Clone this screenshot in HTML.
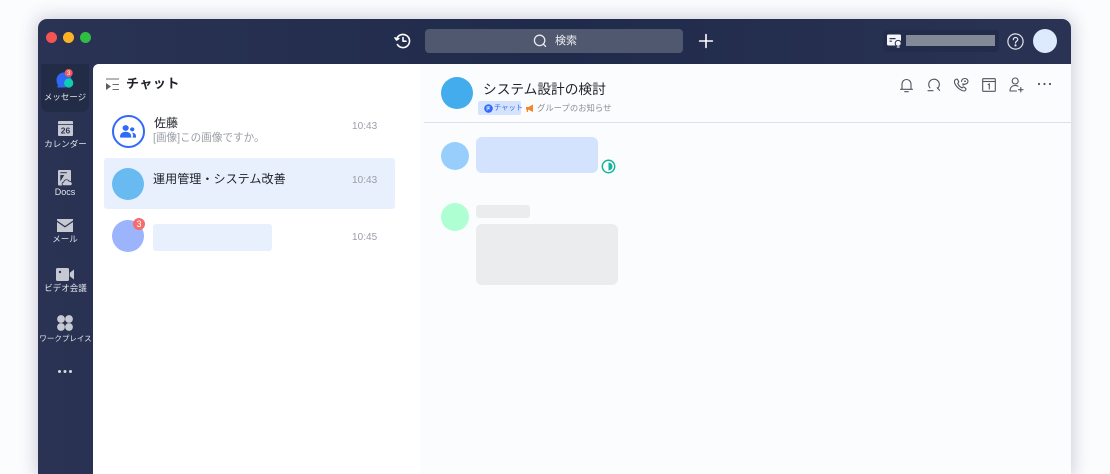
<!DOCTYPE html>
<html lang="ja">
<head>
<meta charset="utf-8">
<style>
*{box-sizing:border-box;margin:0;padding:0}
html,body{width:1110px;height:474px;overflow:hidden;background:#fbfcfe;font-family:"Liberation Sans","Noto Sans CJK JP",sans-serif}
.a{position:absolute}
.win{position:absolute;left:38px;top:19px;width:1033px;height:455px;border-radius:9px 9px 0 0;background:linear-gradient(90deg,#2a3353,#202a4b 50%,#2a3353);box-shadow:0 0 16px 3px rgba(60,70,100,.22)}
.clip{position:absolute;left:0;top:0;width:1110px;height:474px;overflow:hidden}
.dot{position:absolute;width:11px;height:11px;border-radius:50%;top:32px}
.nav{position:absolute;color:#e4e6ec;font-size:8.5px;line-height:12px;text-align:center;white-space:nowrap}
.t{position:absolute;white-space:nowrap}
.time{position:absolute;left:352px;font-size:10px;color:#9a9ea6;line-height:14px;letter-spacing:.05px}
</style>
</head>
<body>
<div class="clip">
<div class="win"></div>
<div class="dot" style="left:46px;background:#f45452"></div>
<div class="dot" style="left:63px;background:#fbb325"></div>
<div class="dot" style="left:80px;background:#31bd44"></div>

<!-- top bar -->
<svg class="a" style="left:393px;top:31px" width="20" height="20" viewBox="0 0 20 20" fill="none" stroke="#fff" stroke-width="1.600" stroke-linecap="round" stroke-linejoin="round"><path d="M3.600 8.200A6.600 6.600 0 1 1 4.400 13.600"/><path d="M2 6.800 3.600 9l2.200-1.400"/><path d="M10 6.600v3.600h3"/></svg>
<div class="a" style="left:425px;top:29px;width:258px;height:24px;border-radius:4px;background:#50586f"></div>
<svg class="a" style="left:532px;top:33px" width="16" height="16" viewBox="0 0 16 16" fill="none" stroke="#e9ebf0" stroke-width="1.300" stroke-linecap="round"><circle cx="7.600" cy="7.400" r="5.200"/><path d="M11.400 11.200 13.600 13.400"/></svg>
<div class="t" style="left:555px;top:33px;font-size:11px;line-height:16px;color:#eceef2">検索</div>
<svg class="a" style="left:698px;top:33px" width="16" height="16" viewBox="0 0 16 16" stroke="#fff" stroke-width="1.600" stroke-linecap="round"><path d="M8 1.600v12.800M1.600 8h12.800"/></svg>
<div class="a" style="left:883px;top:30px;width:116px;height:22px;border-radius:4px;background:#232c4b"></div>
<svg class="a" style="left:887px;top:34px" width="15" height="14" viewBox="0 0 15 14"><rect x="0" y=".5" width="14" height="11" rx="1.200" fill="#f4f5f8"/><path d="M2.500 4h6v1.200h-6zM2.500 6.600h2.400v1.200H2.500z" fill="#2b3453"/><circle cx="11.200" cy="9.400" r="3" fill="#f4f5f8" stroke="#232c4b"/><path d="M9.800 12.400h2.800v1.200H9.800z" fill="#f4f5f8"/></svg>
<div class="a" style="left:906px;top:35px;width:89px;height:11px;background:#848998"></div>
<svg class="a" style="left:1007px;top:33px" width="17" height="17" viewBox="0 0 17 17" fill="none" stroke="#e4e6ec" stroke-width="1.200" stroke-linecap="round"><circle cx="8.500" cy="8.500" r="7.600"/><path d="M6.300 6.700C6.300 5.300 7.300 4.500 8.500 4.500 9.800 4.500 10.800 5.300 10.800 6.500 10.800 8 8.500 8.300 8.500 10"/><circle cx="8.500" cy="12.400" r=".5" fill="#e4e6ec"/></svg>
<div class="a" style="left:1033px;top:29px;width:24px;height:24px;border-radius:50%;background:#dde9fd"></div>

<!-- sidebar -->
<div class="a" style="left:41px;top:64px;width:48px;height:48px;border-radius:0 0 7px 7px;background:#232c46"></div>
<svg class="a" style="left:54px;top:68px" width="24" height="24" viewBox="0 0 24 24"><path d="M10 4.500C14 4.500 17.500 7.500 17.500 12S14 19.500 10 19.500H3.200L3.900 17C3 15.800 2.500 14 2.500 12 2.500 7.500 6 4.500 10 4.500Z" fill="#2f68f4"/><circle cx="14.700" cy="15" r="4.600" fill="#0fcdb3"/><circle cx="14.700" cy="5" r="4" fill="#ee5b5e"/><text x="14.700" y="7.200" font-size="6" fill="#fff" text-anchor="middle" font-family="Liberation Sans">3</text></svg>
<div class="nav" style="left:41px;width:48px;top:91px">メッセージ</div>

<svg class="a" style="left:58px;top:121px" width="15" height="15" viewBox="0 0 15 15"><rect width="15" height="15" rx="1" fill="#c6c9d2"/><rect x="0" y="3" width="15" height=".8" fill="#2a3353"/><text x="7.500" y="12.500" font-size="8.500" font-weight="700" fill="#2a3353" text-anchor="middle" font-family="Liberation Sans">26</text></svg>
<div class="nav" style="left:38px;width:55px;top:138px">カレンダー</div>

<svg class="a" style="left:58px;top:170px" width="16" height="16" viewBox="0 0 16 16"><rect x="0" y="0" width="13" height="15.500" rx="1" fill="#c6c9d2"/><path d="M2.300 2.200h6.500v1H2.300z" fill="#2a3353"/><path d="M2.300 5h4L2.300 11.500z" fill="#2a3353"/><path d="M6 15.700c-2.200 0-2.700-3.200-.3-3.600.4-2.700 4.300-3.200 5.300-.9 3-.3 4.600 3.700 1.500 4.500z" fill="#c6c9d2" stroke="#2a3353" stroke-width=".8"/></svg>
<div class="nav" style="left:41px;width:48px;top:186px;font-size:9px">Docs</div>

<svg class="a" style="left:57px;top:219px" width="16" height="13" viewBox="0 0 16 13"><path d="M0 0h16v1.500L8 7 0 1.500z" fill="#c6c9d2"/><path d="M0 3 8 8.500 16 3v10H0z" fill="#c6c9d2"/></svg>
<div class="nav" style="left:41px;width:48px;top:233px">メール</div>

<svg class="a" style="left:56px;top:268px" width="18" height="13" viewBox="0 0 18 13"><rect width="13" height="13" rx="1.500" fill="#c6c9d2"/><path d="M13.800 4.800 18 1.500v10l-4.200-3.200z" fill="#c6c9d2"/><circle cx="4" cy="4" r="1.200" fill="#2a3353"/></svg>
<div class="nav" style="left:38px;width:55px;top:282px">ビデオ会議</div>

<svg class="a" style="left:57px;top:315px" width="16" height="16" viewBox="0 0 16 16" fill="#c6c9d2"><circle cx="4" cy="4" r="3.900"/><circle cx="12" cy="4" r="3.900"/><circle cx="4" cy="12" r="3.900"/><circle cx="12" cy="12" r="3.900"/></svg>
<div class="nav" style="left:38px;width:55px;top:333px;font-size:7.500px">ワークプレイス</div>

<svg class="a" style="left:57px;top:369px" width="16" height="5" viewBox="0 0 16 5" fill="#d8dae1"><circle cx="2.500" cy="2.500" r="1.500"/><circle cx="8" cy="2.500" r="1.500"/><circle cx="13.500" cy="2.500" r="1.500"/></svg>

<!-- panels -->
<div class="a" style="left:93px;top:64px;width:978px;height:410px;background:#fbfcfe;border-radius:6px 0 0 0;overflow:hidden">
  <div class="a" style="left:0;top:0;width:327px;height:410px;background:#fff"></div>
</div>

<!-- list header -->
<svg class="a" style="left:105px;top:77px" width="15" height="15" viewBox="0 0 15 15" fill="none" stroke="#6a6e77" stroke-width="1.100"><path d="M1 2h13M7.500 7.500H14M7.500 12.500H14"/><path d="M1 6l5 3.500L1 13z" fill="#5b5f68" stroke="none"/></svg>
<div class="t" style="left:126px;top:75px;font-size:13px;line-height:18px;font-weight:700;color:#1f2329;letter-spacing:.5px">チャット</div>

<!-- row 1 -->
<div class="a" style="left:112px;top:115px;width:33px;height:33px;border-radius:50%;border:2px solid #2f6bf6;background:#fff"></div>
<svg class="a" style="left:120px;top:125px" width="16" height="13" viewBox="0 0 17 15" preserveAspectRatio="none" fill="#2f6bf6"><circle cx="6" cy="3.500" r="3.300"/><circle cx="13" cy="5" r="2.300"/><path d="M0 13.500C0 10 2.500 7.800 6 7.800S12 10 12 13.500c0 .6-.4 1-1 1H1c-.6 0-1-.4-1-1z"/><path d="M13.200 14.500H17v-1.800c0-2-1.500-3.700-4.200-3.700.8 1.300 1.100 2.500 1.100 3.700z"/></svg>
<div class="t" style="left:154px;top:115px;font-size:12px;line-height:16px;color:#1f2329">佐藤</div>
<div class="t" style="left:153px;top:131px;font-size:10.600px;line-height:14px;color:#9a9ea6">[画像]この画像ですか。</div>
<div class="time" style="top:120px">10:43</div>

<!-- row 2 -->
<div class="a" style="left:104px;top:158px;width:291px;height:51px;border-radius:3px;background:#e9f0fd"></div>
<div class="a" style="left:112px;top:168px;width:32px;height:32px;border-radius:50%;background:#69baf1"></div>
<div class="t" style="left:153px;top:171px;font-size:12.100px;line-height:16px;color:#1f2329">運用管理・システム改善</div>
<div class="time" style="top:174px">10:43</div>

<!-- row 3 -->
<div class="a" style="left:112px;top:220px;width:32px;height:32px;border-radius:50%;background:#9bb4fc"></div>
<div class="a" style="left:133px;top:218px;width:12px;height:12px;border-radius:50%;background:#f56c6c;color:#fff;font-size:9px;line-height:12px;text-align:center">3</div>
<div class="a" style="left:153px;top:224px;width:119px;height:27px;border-radius:3px;background:#e8effd"></div>
<div class="time" style="top:231px">10:45</div>

<!-- chat header -->
<div class="a" style="left:441px;top:77px;width:32px;height:32px;border-radius:50%;background:#42aced"></div>
<div class="t" style="left:483px;top:80px;font-size:13.700px;line-height:19px;color:#1f2329">システム設計の検討</div>
<div class="a" style="left:478px;top:101px;width:43px;height:14px;border-radius:2px;background:#d5e3fd"></div>
<svg class="a" style="left:484px;top:103.500px" width="9" height="9" viewBox="0 0 9 9"><circle cx="4.500" cy="4.500" r="4.300" fill="#2f6bf6"/><path d="M3 6.500V2.800h2.500L3.800 4.800H6" stroke="#d5e3fd" stroke-width=".8" fill="none"/></svg>
<div class="t" style="left:494px;top:101px;font-size:7.300px;line-height:14px;color:#2f6bf6">チャット</div>
<svg class="a" style="left:526px;top:103.500px" width="8" height="9" viewBox="0 0 8 9"><path d="M0 3h2.500L7 .5v7.500L2.500 5.800H2V8H.8V5.800H0z" fill="#f5872a"/></svg>
<div class="t" style="left:537px;top:101px;font-size:8.350px;line-height:14px;color:#8b8f97">グループのお知らせ</div>

<!-- header icons -->
<svg class="a" style="left:899px;top:77px" width="15" height="16" viewBox="0 0 15 16" fill="none" stroke="#4f535c" stroke-width="1.100" stroke-linecap="round" stroke-linejoin="round"><path d="M1.500 12.300h12M3 12.300V7A4.500 4.500 0 0 1 12 7v5.300"/><path d="M5.700 14.700h3.600"/></svg>
<svg class="a" style="left:926px;top:77px" width="16" height="16" viewBox="0 0 16 16" fill="none" stroke="#4f535c" stroke-width="1.100" stroke-linecap="round"><path d="M3.900 10.800A5.300 5.300 0 1 1 11.800 11.200"/><path d="M11.200 10.800l2.400 2.600M2 13.700h5"/></svg>
<svg class="a" style="left:953px;top:77px" width="16" height="16" viewBox="0 0 16 16" fill="none" stroke="#4f535c" stroke-width="1.100" stroke-linecap="round" stroke-linejoin="round"><path d="M2 3c1-1 2-1.200 2.600-.4l1 1.800c.3.600 0 1.200-.8 1.800.6 2 2.300 3.900 4.300 4.700.6-.8 1.300-1.100 1.900-.8l1.600 1.200c.6.600.4 1.600-.6 2.400-1 .6-2.500.3-4.500-1C4.500 11 2.800 8.500 1.800 6.500 1.300 5 1.400 3.800 2 3z"/><path d="M8.500 4.500C8.500 2.700 10 1.500 11.800 1.500s3.200 1.200 3.200 2.800-1.400 2.800-3.200 2.800l-1.800 1v-1.500"/><circle cx="12" cy="4.300" r=".9" fill="#4f535c" stroke="none"/></svg>
<svg class="a" style="left:982px;top:78px" width="14" height="14" viewBox="0 0 14 14" fill="none" stroke="#4f535c" stroke-width="1.100"><rect x=".7" y=".7" width="12.600" height="12.600" rx=".6"/><path d="M.7 3.500h12.600"/><path d="M6.200 6.500 7.300 6v5" stroke-linecap="round"/></svg>
<svg class="a" style="left:1009px;top:77px" width="15" height="16" viewBox="0 0 15 16" fill="none" stroke="#4f535c" stroke-width="1.100" stroke-linecap="round"><circle cx="6.200" cy="4" r="3"/><path d="M1 14c0-3.400 2-5.500 5.200-5.500 1.100 0 2 .2 2.800.7M1 14h6.500"/><path d="M11.800 10.500v4.400M9.600 12.700H14"/></svg>
<svg class="a" style="left:1037px;top:82px" width="15" height="4" viewBox="0 0 15 4" fill="#4f535c"><circle cx="2" cy="2" r="1.100"/><circle cx="7.500" cy="2" r="1.100"/><circle cx="13" cy="2" r="1.100"/></svg>

<div class="a" style="left:424px;top:122px;width:647px;height:1px;background:#dfe1e6"></div>

<!-- messages -->
<div class="a" style="left:441px;top:142px;width:28px;height:28px;border-radius:50%;background:#98cefc"></div>
<div class="a" style="left:476px;top:137px;width:122px;height:36px;border-radius:6px;background:#d3e2fd"></div>
<svg class="a" style="left:601px;top:159px" width="15" height="15" viewBox="0 0 15 15"><circle cx="7.500" cy="7.500" r="6.200" fill="#fff" stroke="#14b39a" stroke-width="1.500"/><path d="M7.500 3.500a4 4 0 0 1 0 8z" fill="#14b39a"/></svg>

<div class="a" style="left:441px;top:203px;width:28px;height:28px;border-radius:50%;background:#aeffd2"></div>
<div class="a" style="left:476px;top:205px;width:54px;height:13px;border-radius:3px;background:#ebecee"></div>
<div class="a" style="left:476px;top:224px;width:142px;height:61px;border-radius:6px;background:#ebecee"></div>
</div>
</body>
</html>
